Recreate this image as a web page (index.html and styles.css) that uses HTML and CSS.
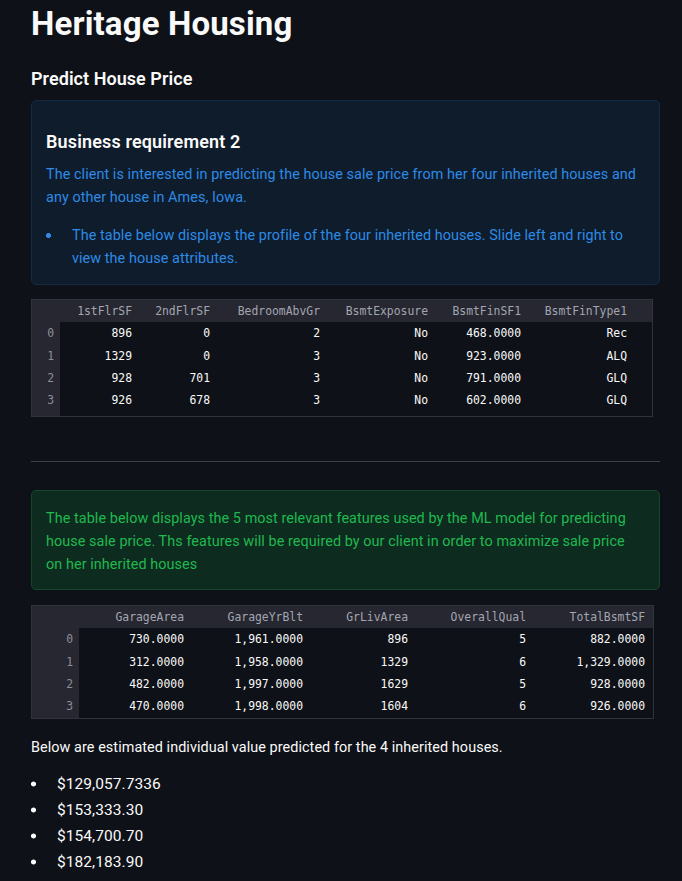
FILE: index.html
```html
<!DOCTYPE html>
<html lang="en">
<head>
<meta charset="utf-8">
<title>Heritage Housing</title>
<link rel="stylesheet" href="styles.css">
</head>
<body>
<main class="page">
  <h1 class="title">Heritage Housing</h1>
  <h3 class="subtitle">Predict House Price</h3>

  <div class="alert alert-info">
    <h3 class="alert-heading">Business requirement 2</h3>
    <p class="alert-text">The client is interested in predicting the house sale price from her four inherited houses and any other house in Ames, Iowa.</p>
    <ul class="bullets">
      <li>The table below displays the profile of the four inherited houses. Slide left and right to view the house attributes.</li>
    </ul>
  </div>

  <div class="grid grid-one">
    <table class="data">
      <colgroup>
        <col class="w28"><col class="w80"><col class="w78"><col class="w110"><col class="w108"><col class="w93"><col class="w123">
      </colgroup>
      <thead>
        <tr><th class="idx"></th><th>1stFlrSF</th><th>2ndFlrSF</th><th>BedroomAbvGr</th><th>BsmtExposure</th><th>BsmtFinSF1</th><th class="last">BsmtFinType1</th></tr>
      </thead>
      <tbody>
        <tr><td class="idx">0</td><td>896</td><td>0</td><td>2</td><td>No</td><td>468.0000</td><td class="last">Rec</td></tr>
        <tr><td class="idx">1</td><td>1329</td><td>0</td><td>3</td><td>No</td><td>923.0000</td><td class="last">ALQ</td></tr>
        <tr><td class="idx">2</td><td>928</td><td>701</td><td>3</td><td>No</td><td>791.0000</td><td class="last">GLQ</td></tr>
        <tr><td class="idx">3</td><td>926</td><td>678</td><td>3</td><td>No</td><td>602.0000</td><td class="last">GLQ</td></tr>
        <tr class="scroll-gap"><td class="idx"></td><td></td><td></td><td></td><td></td><td></td><td class="last"></td></tr>
      </tbody>
    </table>
  </div>

  <hr class="divider">

  <div class="alert alert-success">
    <p class="alert-text">The table below displays the 5 most relevant features used by the ML model for predicting house sale price. Ths features will be required by our client in order to maximize sale price on her inherited houses</p>
  </div>

  <div class="grid grid-two">
    <table class="data">
      <colgroup>
        <col class="w47"><col class="w113"><col class="w119"><col class="w105"><col class="w118"><col class="w119b">
      </colgroup>
      <thead>
        <tr><th class="idx"></th><th>GarageArea</th><th>GarageYrBlt</th><th>GrLivArea</th><th>OverallQual</th><th>TotalBsmtSF</th></tr>
      </thead>
      <tbody>
        <tr><td class="idx">0</td><td>730.0000</td><td>1,961.0000</td><td>896</td><td>5</td><td>882.0000</td></tr>
        <tr><td class="idx">1</td><td>312.0000</td><td>1,958.0000</td><td>1329</td><td>6</td><td>1,329.0000</td></tr>
        <tr><td class="idx">2</td><td>482.0000</td><td>1,997.0000</td><td>1629</td><td>5</td><td>928.0000</td></tr>
        <tr><td class="idx">3</td><td>470.0000</td><td>1,998.0000</td><td>1604</td><td>6</td><td>926.0000</td></tr>
      </tbody>
    </table>
  </div>

  <p class="note">Below are estimated individual value predicted for the 4 inherited houses.</p>
  <ul class="bullets prices">
    <li>$129,057.7336</li>
    <li>$153,333.30</li>
    <li>$154,700.70</li>
    <li>$182,183.90</li>
  </ul>
</main>
</body>
</html>
```

FILE: styles.css
```css
html, body {
  margin: 0;
  padding: 0;
  background: #0e1117;
}

body {
  color: #fafafa;
  font-family: Roboto, "Noto Sans", sans-serif;
  font-size: 14.4px;
  line-height: 23px;
  letter-spacing: 0.07px;
}

.page {
  width: 629px;
  padding: 4px 0 0 31px;
}

.title {
  margin: 0;
  font-size: 33px;
  line-height: 39px;
  font-weight: 700;
  letter-spacing: 0.15px;
  color: #fafafa;
}

.subtitle {
  margin: 25px 0 0;
  font-size: 18px;
  line-height: 22px;
  font-weight: 600;
  letter-spacing: 0.05px;
  color: #fafafa;
}

.alert {
  box-sizing: border-box;
  width: 629px;
  border-radius: 5px;
}

.alert-info {
  margin-top: 10px;
  padding: 30px 16px 14px 14px;
  background: #0f1c2b;
  border: 1px solid #132a42;
  color: #2d8ae6;
}

.alert-success {
  margin-top: 28px;
  padding: 16px 16px 13px 14px;
  background: #0e2b1f;
  border: 1px solid #15472b;
  color: #1fb94f;
}

.alert-heading {
  margin: 0 0 10px;
  font-size: 18px;
  line-height: 22px;
  font-weight: 600;
  letter-spacing: 0.15px;
  color: #fafafa;
}

.alert-text {
  margin: 0;
}

.alert-info .alert-text {
  margin-bottom: 15px;
}

.bullets {
  margin: 0;
  padding: 0;
  list-style: none;
}

.bullets li {
  display: flex;
}

.bullets li::before {
  content: "";
  flex: 0 0 26px;
  height: 23px;
  background: radial-gradient(circle at 2.5px 11.5px, currentColor 2.2px, transparent 2.8px) no-repeat;
}

.grid {
  box-sizing: border-box;
  border: 1px solid #31333c;
  background: #0e1117;
}

.grid-one {
  width: 622px;
  margin-top: 14px;
}

.grid-two {
  width: 623px;
  margin-top: 15px;
}

.data {
  border-collapse: collapse;
  table-layout: fixed;
  width: 100%;
  font-family: "DejaVu Sans Mono", "Liberation Mono", monospace;
  font-size: 11.4px;
  line-height: 14px;
  letter-spacing: 0;
}

.data th,
.data td {
  padding: 0 8px 0 0;
  text-align: right;
  white-space: nowrap;
  overflow: hidden;
}

.data th {
  height: 22px;
  background: #262730;
  color: #a3a6b0;
  font-weight: 400;
}

.data td {
  height: 22.4px;
  color: #fafafa;
}

.data td.idx {
  background: #262730;
  color: #8b8e98;
  padding-right: 6px;
}

.data .last {
  padding-right: 25px;
}

.data tr.scroll-gap td {
  height: 4.4px;
}

.w28 { width: 28px; }
.w80 { width: 80px; }
.w78 { width: 78px; }
.w110 { width: 110px; }
.w108 { width: 108px; }
.w93 { width: 93px; }
.w123 { width: 123px; }
.w47 { width: 47px; }
.w113 { width: 113px; }
.w119 { width: 119px; }
.w105 { width: 105px; }
.w118 { width: 118px; }
.w119b { width: 119px; }

.divider {
  width: 629px;
  margin: 44px 0 0;
  border: 0;
  border-top: 1px solid #3d3f47;
  height: 0;
}

.note {
  margin: 17px 0 0;
}

.prices {
  margin-top: 12px;
}

.prices li {
  font-size: 15.5px;
  line-height: 26px;
}

.prices li::before {
  height: 26px;
  background: radial-gradient(circle at 2.5px 13px, currentColor 2.2px, transparent 2.8px) no-repeat;
}
```
